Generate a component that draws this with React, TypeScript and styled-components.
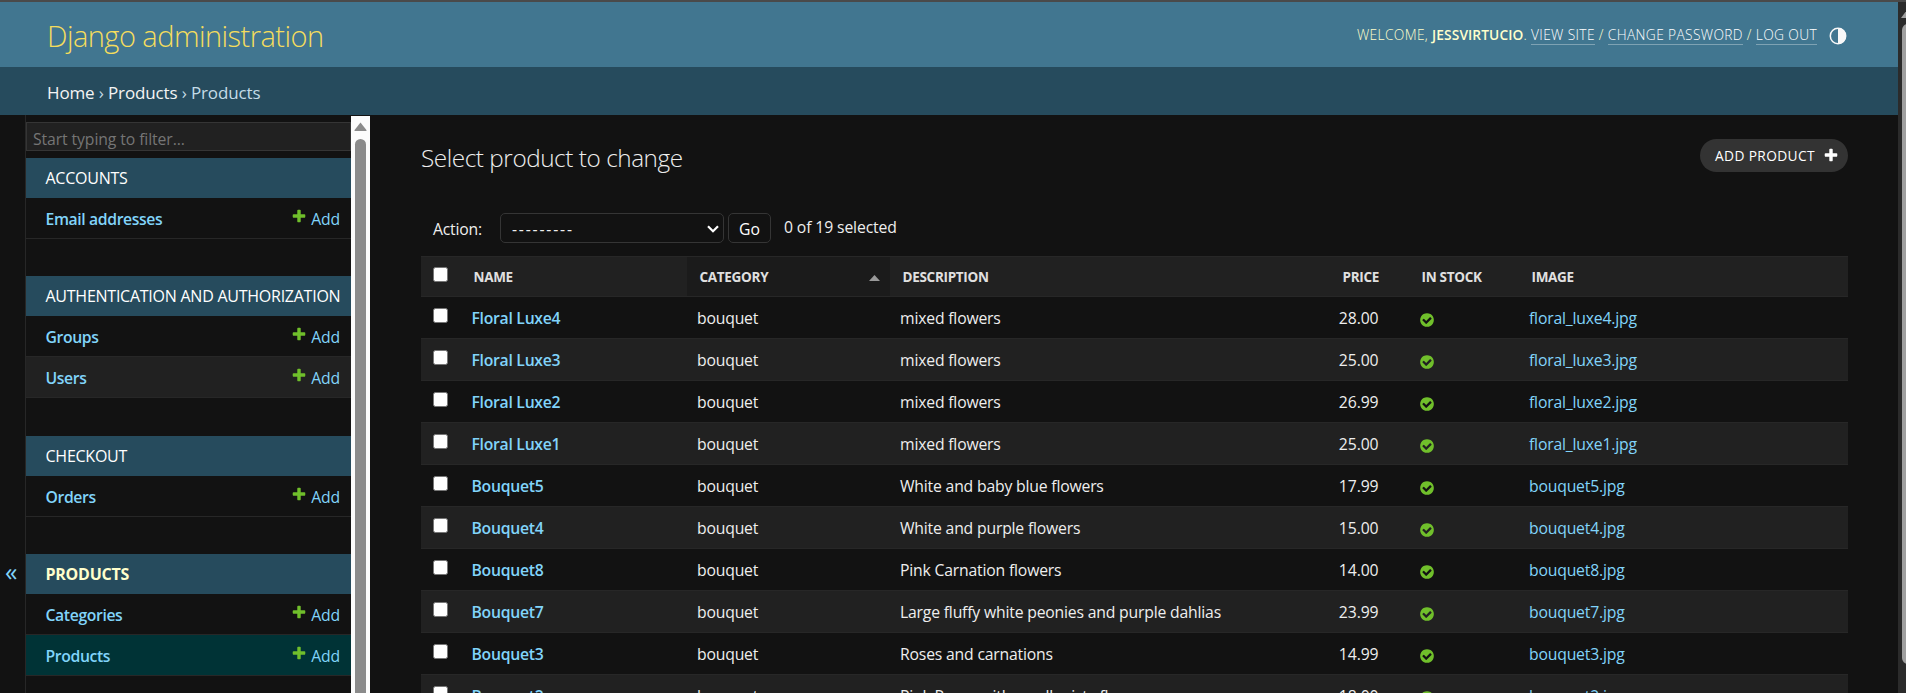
import React from 'react';
import styled, { createGlobalStyle, css } from 'styled-components';

const GlobalStyle = createGlobalStyle`
  * { box-sizing: border-box; }
  body {
    margin: 0;
    background: #121212;
    color: #eeeeee;
    font-family: "Open Sans", "Noto Sans", sans-serif;
    font-size: 15.75px;
    letter-spacing: -0.19px;
    overflow: hidden;
  }
  a { color: #81d4fa; text-decoration: none; }
`;

const Window = styled.div`
  display: flex;
  height: 693px;
  border-top: 2px solid #4a4a4a;
  overflow: hidden;
`;

const Page = styled.div`
  flex: 1;
  min-width: 0;
  display: flex;
  flex-direction: column;
`;

const Header = styled.header`
  flex: none;
  height: 65px;
  padding: 0 51px 0 47px;
  display: flex;
  align-items: center;
  justify-content: space-between;
  background: #417690;
`;

const Branding = styled.h1`
  margin: 0;
  padding-top: 2px;
  color: #f5dd5d;
  font-size: 29px;
  font-weight: 300;
  letter-spacing: -0.54px;
`;

const UserTools = styled.div`
  display: flex;
  align-items: center;
  gap: 12px;
  color: #ffffcc;
  font-size: 13.75px;
  font-weight: 300;
  letter-spacing: 0.36px;
  line-height: 16px;
  white-space: pre;

  strong { font-weight: 600; letter-spacing: 0.1px; }
  a {
    color: #ffffff;
    border-bottom: 1px solid rgba(255, 255, 255, 0.32);
  }
  svg { margin-top: 3px; }
`;

const Breadcrumbs = styled.nav`
  flex: none;
  height: 48px;
  padding: 3px 47px 0;
  display: flex;
  align-items: center;
  background: #264b5d;
  color: #c4dce8;
  font-size: 17px;
  letter-spacing: -0.14px;
  white-space: pre;

  a { color: #f4f4f4; }
`;

const Main = styled.div`
  flex: 1;
  min-height: 0;
  display: flex;
  overflow: hidden;
`;

const NavToggle = styled.button`
  flex: none;
  width: 26px;
  padding: 439px 0 0 5px;
  display: flex;
  align-items: flex-start;
  background: #121212;
  border: 0;
  border-right: 1px solid #272727;
  color: #81d4fa;
  font: 400 25px/34px "Open Sans", sans-serif;
`;

const Sidebar = styled.aside`
  flex: none;
  width: 325px;
  padding-top: 7px;
  overflow: hidden;
`;

const Filter = styled.input`
  display: block;
  width: 325px;
  height: 29px;
  margin: 0 0 7px;
  padding: 4px 6px 0;
  border: 1px solid #353535;
  border-radius: 0;
  background: #212121;
  font-family: inherit;
  font-size: 15.75px;
  letter-spacing: -0.1px;
  &::placeholder { color: #757575; opacity: 1; }
`;

const Module = styled.section<{ $gap: number }>`
  margin-bottom: ${(p) => p.$gap}px;
`;

const ModuleTitle = styled.h2<{ $current?: boolean }>`
  margin: 0;
  height: 40px;
  padding-left: 19.5px;
  display: flex;
  align-items: center;
  background: #264b5d;
  color: ${(p) => (p.$current ? '#ffffcc' : '#ffffff')};
  font-size: 16px;
  font-weight: ${(p) => (p.$current ? 700 : 400)};
  letter-spacing: -0.25px;
  text-transform: uppercase;
  white-space: nowrap;
`;

const ModelRow = styled.div<{ $tone: string }>`
  height: 41px;
  padding: 2px 11px 0 19.5px;
  display: flex;
  align-items: center;
  justify-content: space-between;
  border-bottom: 1px solid #272727;
  background: ${(p) => p.$tone};
`;

const ModelLink = styled.a`
  font-weight: 600;
  letter-spacing: -0.38px;
`;

const AddLink = styled.a`
  display: flex;
  align-items: center;
  gap: 4px;
  svg { margin-top: -6px; }
`;

const ScrollTrack = styled.div`
  flex: none;
  width: 19px;
  margin-top: 1px;
  padding-top: 6px;
  display: flex;
  flex-direction: column;
  align-items: center;
  gap: 8px;
  background: #fcfcfc;
`;

const ScrollThumb = styled.div`
  width: 11px;
  flex: 1;
  border-radius: 6px 6px 0 0;
  background: #8b8b8b;
`;

const Content = styled.main`
  flex: 1;
  min-width: 0;
  padding: 24px 50px 0 51px;
`;

const TitleBar = styled.div`
  height: 74px;
  display: flex;
  align-items: flex-start;
  justify-content: space-between;
`;

const Title = styled.h2`
  margin: 1px 0 0;
  font-size: 24.3px;
  font-weight: 300;
  line-height: 36px;
  letter-spacing: -0.44px;
`;

const AddButton = styled.a`
  width: 148px;
  height: 33px;
  padding: 0 9px 0 15px;
  display: flex;
  align-items: center;
  justify-content: space-between;
  border-radius: 17px;
  background: #333333;
  color: #ffffff;
  font-size: 13.75px;
  letter-spacing: 0.36px;
  svg { margin-top: -1px; }
`;

const Actions = styled.div`
  height: 30px;
  margin-bottom: 13px;
  padding-left: 12px;
  display: flex;
  align-items: center;
`;

const ActionLabel = styled.label`
  width: 67px;
  padding-top: 2px;
`;

const ActionCounter = styled.span`
  margin-top: -2px;
  letter-spacing: -0.13px;
`;

const controlBox = css`
  height: 30px;
  border: 1px solid #353535;
  border-radius: 5px;
  background: #121212;
  color: #eeeeee;
`;

const ActionSelect = styled.div`
  ${controlBox}
  width: 224px;
  margin-right: 4px;
  padding: 2px 4px 0 11px;
  display: flex;
  align-items: center;
  justify-content: space-between;
  letter-spacing: 1.8px;
`;

const GoButton = styled.button`
  ${controlBox}
  width: 43px;
  margin-right: 13px;
  padding: 2px 0 0;
  font: inherit;
  color: #ffffff;
`;

const Table = styled.div`
  border-top: 1px solid #272727;
`;

const columns = css`
  display: grid;
  grid-template-columns: 40px 226px 203px 442px 77px 110px 1fr;
`;

const HeadRow = styled.div`
  ${columns}
  height: 40px;
  border-bottom: 1px solid #272727;
  background: #212121;
`;

const HeadCell = styled.div<{ $sorted?: boolean; $right?: boolean }>`
  padding: 1px 10px 0 12.5px;
  display: flex;
  align-items: center;
  justify-content: space-between;
  background: ${(p) => (p.$sorted ? '#1b1b1b' : 'transparent')};
  color: #e0e0e0;
  font-size: 13.5px;
  font-weight: 700;
  letter-spacing: -0.3px;
  text-transform: uppercase;
  white-space: nowrap;
  ${(p) => p.$right && css`justify-content: flex-end; padding-right: 30px;`}
  svg { margin-top: 2px; }
`;

const Row = styled.div<{ $alt: boolean }>`
  ${columns}
  height: 42px;
  border-bottom: 1px solid #272727;
  background: ${(p) => (p.$alt ? '#212121' : '#121212')};
`;

const Cell = styled.div<{ $right?: boolean; $strong?: boolean }>`
  padding: 1px 10px 0 10px;
  display: flex;
  align-items: center;
  white-space: nowrap;
  ${(p) => p.$right && css`justify-content: flex-end; padding-right: 30.5px; letter-spacing: -0.1px;`}
  ${(p) => p.$strong && css`font-weight: 600; letter-spacing: -0.28px; padding-left: 10.5px;`}
`;

const YesCell = styled(Cell)`
  padding: 4px 0 0 10px;
`;

const CheckCell = styled.div<{ $top: number }>`
  padding: ${(p) => p.$top}px 0 0 12px;
`;

const Checkbox = styled.div`
  width: 15px;
  height: 15px;
  border: 1px solid #767676;
  border-radius: 2.5px;
  background: #ffffff;
`;

const WindowScroll = styled.div`
  flex: none;
  width: 8px;
  padding: 8px 0 29px 3px;
  display: flex;
  flex-direction: column;
  gap: 6px;
  overflow: hidden;
  background: #2b2b2b;
`;

const WindowThumb = styled.div`
  flex: 1;
  width: 12px;
  margin-left: 1px;
  border-radius: 6px;
  background: #9f9f9f;
`;

const PlusIcon = ({ color, size = 16 }: { color: string; size?: number }) => (
  <svg width={size} height={size} viewBox="0 0 1792 1792" fill={color}>
    <path d="M1600 796v192q0 40-28 68t-68 28h-416v416q0 40-28 68t-68 28h-192q-40 0-68-28t-28-68v-416h-416q-40 0-68-28t-28-68v-192q0-40 28-68t68-28h416v-416q0-40 28-68t68-28h192q40 0 68 28t28 68v416h416q40 0 68 28t28 68z" />
  </svg>
);

const YesIcon = () => (
  <svg width="16" height="16" viewBox="0 0 1792 1792" fill="#70bf2b">
    <path d="M1412 734q0-28-18-46l-91-90q-19-19-45-19t-45 19l-408 407-226-226q-19-19-45-19t-45 19l-91 90q-18 18-18 46 0 27 18 45l362 362q19 19 45 19 27 0 46-19l543-543q18-18 18-45zm252 162q0 209-103 385.5t-279.5 279.5-385.5 103-385.5-103-279.5-279.5-103-385.5 103-385.5 279.5-279.5 385.5-103 385.5 103 279.5 279.5 103 385.5z" />
  </svg>
);

const ThemeIcon = () => (
  <svg width="18" height="18" viewBox="0 0 18 18">
    <circle cx="9" cy="9" r="7.7" fill="none" stroke="#f8f8f8" strokeWidth="1.5" />
    <path d="M9 1a8 8 0 0 1 0 16z" fill="#f8f8f8" />
  </svg>
);

type Model = { name: string; tone?: string };
const apps: { title: string; gap: number; current?: boolean; models: Model[] }[] = [
  { title: 'Accounts', gap: 37, models: [{ name: 'Email addresses' }] },
  { title: 'Authentication and Authorization', gap: 38, models: [{ name: 'Groups' }, { name: 'Users', tone: '#212121' }] },
  { title: 'Checkout', gap: 37, models: [{ name: 'Orders' }] },
  { title: 'Products', gap: 0, current: true, models: [{ name: 'Categories' }, { name: 'Products', tone: '#003336' }] },
];

const products = [
  ['Floral Luxe4', 'mixed flowers', '28.00', 'floral_luxe4.jpg'],
  ['Floral Luxe3', 'mixed flowers', '25.00', 'floral_luxe3.jpg'],
  ['Floral Luxe2', 'mixed flowers', '26.99', 'floral_luxe2.jpg'],
  ['Floral Luxe1', 'mixed flowers', '25.00', 'floral_luxe1.jpg'],
  ['Bouquet5', 'White and baby blue flowers', '17.99', 'bouquet5.jpg'],
  ['Bouquet4', 'White and purple flowers', '15.00', 'bouquet4.jpg'],
  ['Bouquet8', 'Pink Carnation flowers', '14.00', 'bouquet8.jpg'],
  ['Bouquet7', 'Large fluffy white peonies and purple dahlias', '23.99', 'bouquet7.jpg'],
  ['Bouquet3', 'Roses and carnations', '14.99', 'bouquet3.jpg'],
  ['Bouquet2', 'Pink Roses with small misty flowers', '18.00', 'bouquet2.jpg'],
];

export default function App() {
  return (
    <>
      <GlobalStyle />
      <Window>
        <Page>
          <Header>
            <Branding>Django administration</Branding>
            <UserTools>
              <span>
                WELCOME, <strong>JESSVIRTUCIO</strong>. <a>VIEW SITE</a> / <a>CHANGE PASSWORD</a> / <a>LOG OUT</a>
              </span>
              <ThemeIcon />
            </UserTools>
          </Header>
          <Breadcrumbs>
            <a>Home</a> › <a>Products</a> › Products
          </Breadcrumbs>
          <Main>
            <NavToggle>«</NavToggle>
            <Sidebar>
              <Filter placeholder="Start typing to filter..." />
              {apps.map((app) => (
                <Module key={app.title} $gap={app.gap}>
                  <ModuleTitle $current={app.current}>{app.title}</ModuleTitle>
                  {app.models.map((m) => (
                    <ModelRow key={m.name} $tone={m.tone ?? '#121212'}>
                      <ModelLink>{m.name}</ModelLink>
                      <AddLink>
                        <PlusIcon color="#70bf2b" />
                        Add
                      </AddLink>
                    </ModelRow>
                  ))}
                </Module>
              ))}
            </Sidebar>
            <ScrollTrack>
              <svg width="13" height="9" viewBox="0 0 13 9" fill="#8b8b8b">
                <path d="M6.5 0.5L12.6 8.3Q12.6 9 12 9H1Q.4 9 .4 8.3z" />
              </svg>
              <ScrollThumb />
            </ScrollTrack>
            <Content>
              <TitleBar>
                <Title>Select product to change</Title>
                <AddButton>
                  ADD PRODUCT <PlusIcon color="#ffffff" />
                </AddButton>
              </TitleBar>
              <Actions>
                <ActionLabel>Action:</ActionLabel>
                <ActionSelect>
                  ---------
                  <svg width="12" height="8" viewBox="0 0 12 8" fill="none" stroke="#ffffff" strokeWidth="2.2">
                    <path d="M1 1.2L6 6.2L11 1.2" />
                  </svg>
                </ActionSelect>
                <GoButton>Go</GoButton>
                <ActionCounter>0 of 19 selected</ActionCounter>
              </Actions>
              <Table>
                <HeadRow>
                  <CheckCell $top={10}>
                    <Checkbox />
                  </CheckCell>
                  <HeadCell>Name</HeadCell>
                  <HeadCell $sorted>
                    Category
                    <svg width="11" height="6" viewBox="0 0 11 6" fill="#999999">
                      <path d="M5.5 0L11 6H0z" />
                    </svg>
                  </HeadCell>
                  <HeadCell>Description</HeadCell>
                  <HeadCell $right>Price</HeadCell>
                  <HeadCell>In stock</HeadCell>
                  <HeadCell>Image</HeadCell>
                </HeadRow>
                {products.map(([name, description, price, image], i) => (
                  <Row key={name} $alt={i % 2 === 1}>
                    <CheckCell $top={11}>
                      <Checkbox />
                    </CheckCell>
                    <Cell $strong>
                      <a>{name}</a>
                    </Cell>
                    <Cell>bouquet</Cell>
                    <Cell>{description}</Cell>
                    <Cell $right>{price}</Cell>
                    <YesCell>
                      <YesIcon />
                    </YesCell>
                    <Cell>
                      <a>{image}</a>
                    </Cell>
                  </Row>
                ))}
              </Table>
            </Content>
          </Main>
        </Page>
        <WindowScroll>
          <svg width="12" height="8" viewBox="0 0 12 8" fill="#9f9f9f">
            <path d="M6 0L12 8H0z" />
          </svg>
          <WindowThumb />
        </WindowScroll>
      </Window>
    </>
  );
}
